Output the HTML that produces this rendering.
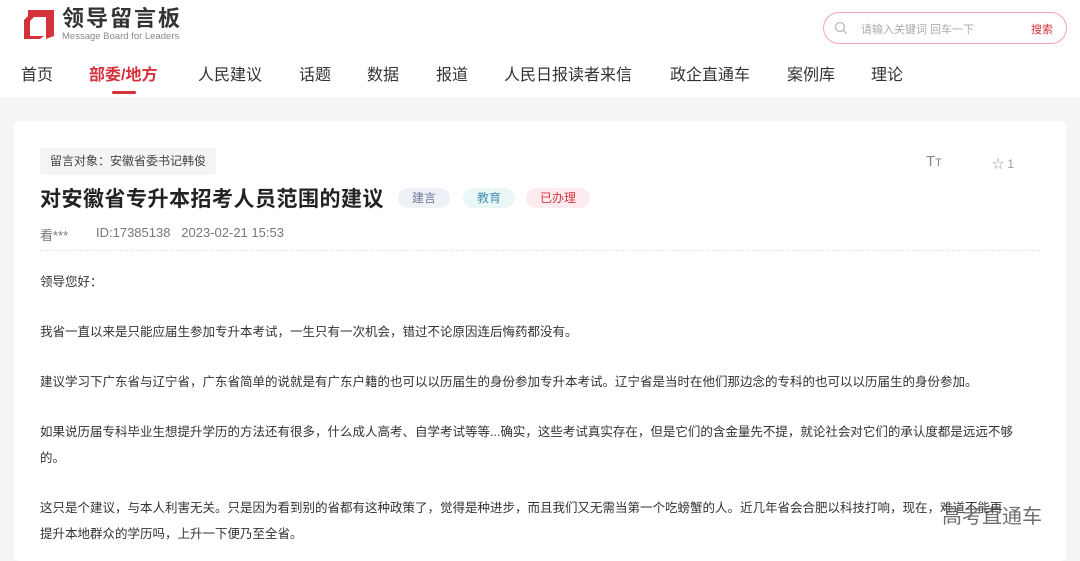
<!DOCTYPE html>
<html><head><meta charset="utf-8"><style>
*{margin:0;padding:0;box-sizing:border-box}
body{width:1080px;height:553px;overflow:hidden;background:#f4f5f7;font-family:"Liberation Sans","Noto Sans CJK SC",sans-serif;position:relative}
.hdr{position:absolute;left:0;top:0;width:1080px;height:97px;background:#fff}
.logo{position:absolute;left:22px;top:8px}
.lt{position:absolute;left:62px;top:6px;font-size:22px;line-height:26px;font-weight:bold;color:#333;letter-spacing:2px}
.ls{position:absolute;left:62px;top:31px;font-size:9.5px;line-height:11px;color:#888}
.search{position:absolute;left:823px;top:12px;width:244px;height:32px;border:1.5px solid #f3a4ad;border-radius:16px}
.search .ph{position:absolute;left:37px;top:8px;font-size:11px;color:#aaa}
.search .bt{position:absolute;right:13px;top:8px;font-size:11px;color:#d0303f}
nav span{position:absolute;top:61px;font-size:16px;color:#333}
.act{color:#d6323c!important;font-weight:bold}
.uline{position:absolute;left:112px;top:91px;width:24px;height:3px;background:#d6323c;border-radius:2px}
.card{position:absolute;left:14px;top:121px;width:1052px;height:440px;background:#fff;border-radius:6px}
.tag{position:absolute;left:40px;top:148px;height:27px;padding:0 10px;background:#f3f4f6;font-size:12px;color:#444;line-height:27px;border-radius:3px}
h1{position:absolute;left:40px;top:183px;font-size:21px;font-weight:bold;color:#222;letter-spacing:0.5px}
.pill{position:absolute;top:188px;height:20px;line-height:20px;font-size:12px;padding:0 14px;border-radius:10px}
.meta{position:absolute;top:225px;font-size:13px;color:#777}
.hr{position:absolute;left:40px;top:250px;width:1000px;border-top:1px dashed #e8e8e8}
p{position:absolute;left:40px;width:985px;font-size:12.5px;color:#333;line-height:26px}
.wm{position:absolute;left:942px;top:500px;font-size:20px;color:#555;opacity:.85}
</style></head><body>
<div class="hdr">
<svg class="logo" width="34" height="32" viewBox="0 0 34 32"><path d="M6 2H32V28L24 31V9H12L6 15Z" fill="#d6323c"/><path d="M2 12L8 6V28H22L18 31H2Z" fill="#d6323c"/></svg>
<div class="lt">领导留言板</div>
<div class="ls">Message Board for Leaders</div>
<div class="search"><svg style="position:absolute;left:10px;top:8px" width="14" height="14" viewBox="0 0 14 14"><circle cx="6" cy="6" r="4.5" fill="none" stroke="#bbb" stroke-width="1.3"/><path d="M9.5 9.5L12.5 12.5" stroke="#bbb" stroke-width="1.3"/></svg><span class="ph">请输入关键词 回车一下</span><span class="bt">搜索</span></div>
<nav><span style="left:21px">首页</span><span class="act" style="left:89px">部委/地方</span><span style="left:198px">人民建议</span><span style="left:299px">话题</span><span style="left:367px">数据</span><span style="left:436px">报道</span><span style="left:504px">人民日报读者来信</span><span style="left:670px">政企直通车</span><span style="left:787px">案例库</span><span style="left:871px">理论</span></nav>
<div class="uline"></div>
</div>
<div class="card"></div>
<div class="tag">留言对象：安徽省委书记韩俊</div>
<span style="position:absolute;left:926px;top:153px;font-size:15px;color:#888">T<span style="font-size:11px">T</span></span>
<span style="position:absolute;left:992px;top:155px;font-size:12px;color:#999">☆ 1</span>
<h1>对安徽省专升本招考人员范围的建议</h1>
<span class="pill" style="left:398px;background:#eef1f6;color:#6b7a99">建言</span>
<span class="pill" style="left:463px;background:#eaf7f7;color:#4a8fb5">教育</span>
<span class="pill" style="left:526px;background:#fdecef;color:#d6323c">已办理</span>
<span class="meta" style="left:40px">看***</span>
<span class="meta" style="left:96px">ID:17385138&nbsp;&nbsp;&nbsp;2023-02-21 15:53</span>
<div class="hr"></div>
<p style="top:269px">领导您好：</p>
<p style="top:319px">我省一直以来是只能应届生参加专升本考试，一生只有一次机会，错过不论原因连后悔药都没有。</p>
<p style="top:369px">建议学习下广东省与辽宁省，广东省简单的说就是有广东户籍的也可以以历届生的身份参加专升本考试。辽宁省是当时在他们那边念的专科的也可以以历届生的身份参加。</p>
<p style="top:419px">如果说历届专科毕业生想提升学历的方法还有很多，什么成人高考、自学考试等等...确实，这些考试真实存在，但是它们的含金量先不提，就论社会对它们的承认度都是远远不够的。</p>
<p style="top:495px">这只是个建议，与本人利害无关。只是因为看到别的省都有这种政策了，觉得是种进步，而且我们又无需当第一个吃螃蟹的人。近几年省会合肥以科技打响，现在，难道不能再<br>提升本地群众的学历吗，上升一下便乃至全省。</p>
<div class="wm">高考直通车</div>
</body></html>
